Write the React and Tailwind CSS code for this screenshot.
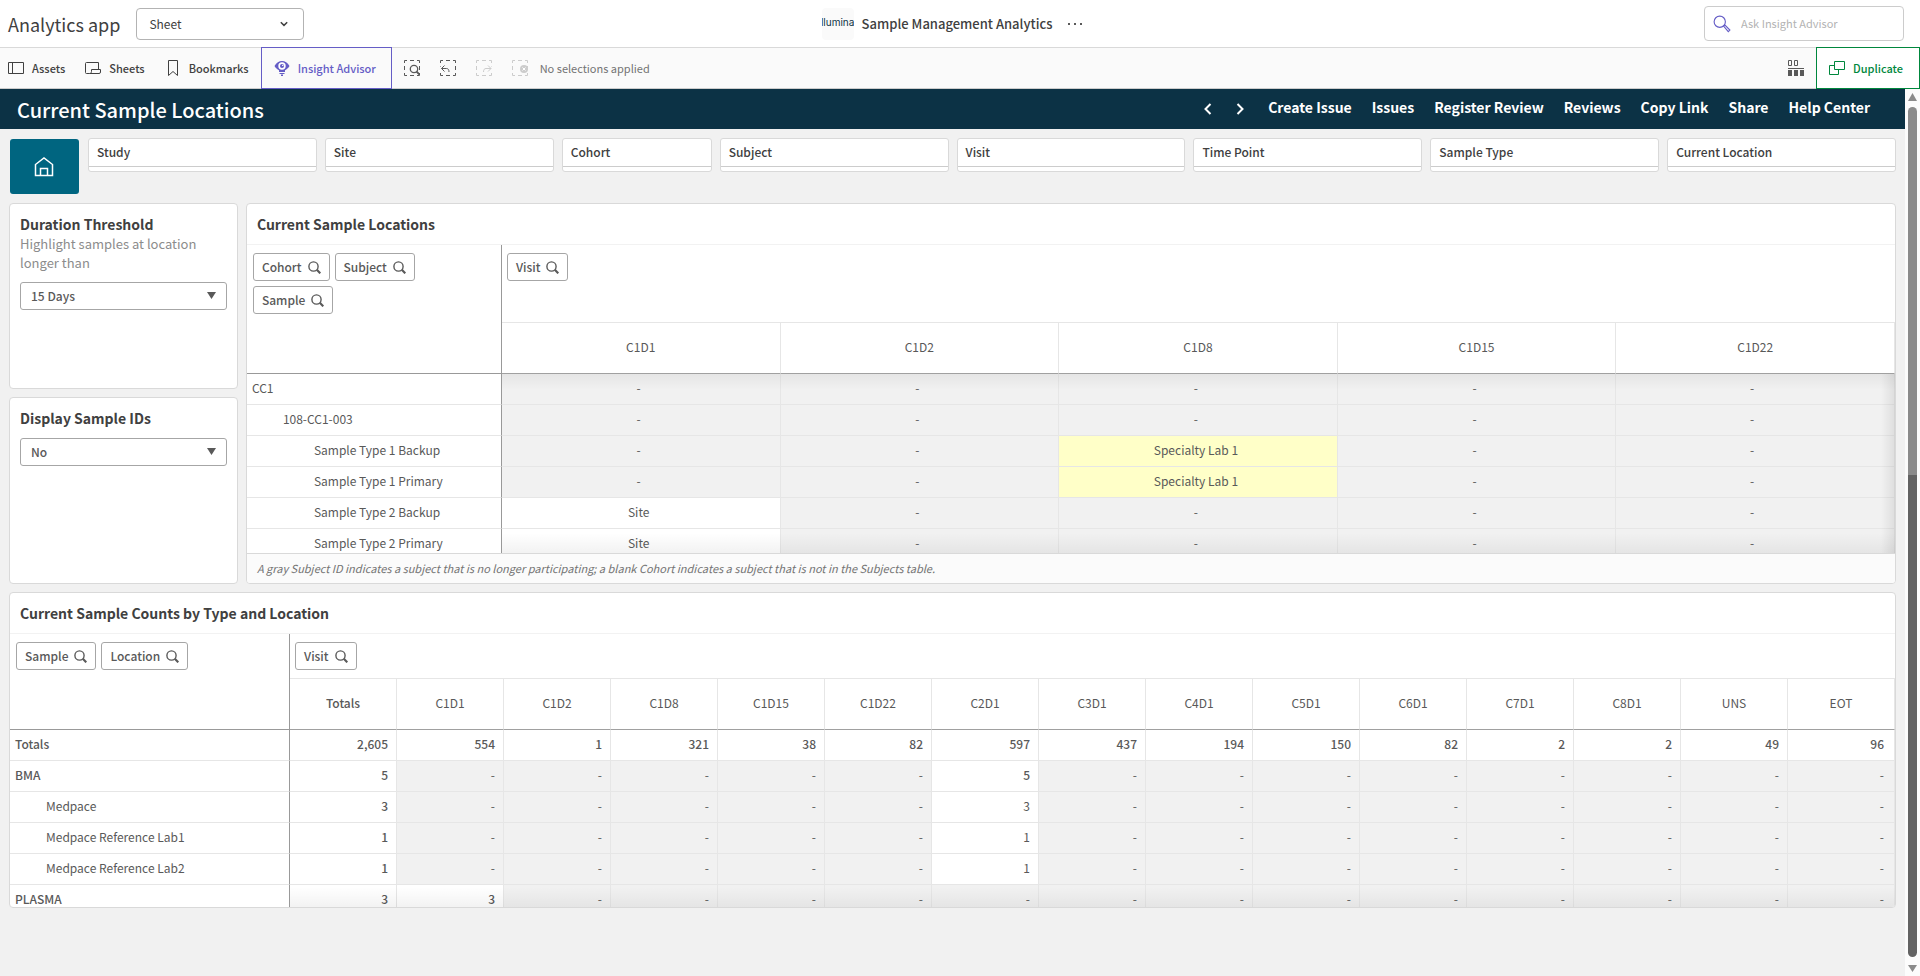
import clsx from 'clsx';

const filters = [
  { name: 'Study', span: 'col-span-3' },
  { name: 'Site', span: 'col-span-3' },
  { name: 'Cohort', span: 'col-span-2' },
  { name: 'Subject', span: 'col-span-3' },
  { name: 'Visit', span: 'col-span-3' },
  { name: 'Time Point', span: 'col-span-3' },
  { name: 'Sample Type', span: 'col-span-3' },
  { name: 'Current Location', span: 'col-span-3' },
];

const navLinks = ['Create Issue', 'Issues', 'Register Review', 'Reviews', 'Copy Link', 'Share', 'Help Center'];

const locationVisits = ['C1D1', 'C1D2', 'C1D8', 'C1D15', 'C1D22'];

const locationRows = [
  { label: 'CC1', level: 0, values: {} },
  { label: '108-CC1-003', level: 1, values: {} },
  { label: 'Sample Type 1 Backup', level: 2, values: { C1D8: 'Specialty Lab 1' } },
  { label: 'Sample Type 1 Primary', level: 2, values: { C1D8: 'Specialty Lab 1' } },
  { label: 'Sample Type 2 Backup', level: 2, values: { C1D1: 'Site' } },
  { label: 'Sample Type 2 Primary', level: 2, values: { C1D1: 'Site' } },
];

const countVisits = [
  'Totals', 'C1D1', 'C1D2', 'C1D8', 'C1D15', 'C1D22', 'C2D1', 'C3D1',
  'C4D1', 'C5D1', 'C6D1', 'C7D1', 'C8D1', 'UNS', 'EOT',
];

const countRows = [
  {
    label: 'Totals',
    level: 0,
    bold: true,
    values: {
      Totals: '2,605', C1D1: '554', C1D2: '1', C1D8: '321', C1D15: '38', C1D22: '82', C2D1: '597', C3D1: '437',
      C4D1: '194', C5D1: '150', C6D1: '82', C7D1: '2', C8D1: '2', UNS: '49', EOT: '96',
    },
  },
  { label: 'BMA', level: 0, bold: true, values: { Totals: '5', C2D1: '5' } },
  { label: 'Medpace', level: 1, values: { Totals: '3', C2D1: '3' } },
  { label: 'Medpace Reference Lab1', level: 1, values: { Totals: '1', C2D1: '1' } },
  { label: 'Medpace Reference Lab2', level: 1, values: { Totals: '1', C2D1: '1' } },
  { label: 'PLASMA', level: 0, bold: true, values: { Totals: '3', C1D1: '3' } },
];

const indent = ['pl-[5px]', 'pl-9', 'pl-[67px]'];

function Icon({ className, children, viewBox = '0 0 16 16' }) {
  return (
    <svg
      className={clsx('shrink-0', className)}
      viewBox={viewBox}
      fill="none"
      stroke="currentColor"
      strokeWidth="1"
      aria-hidden="true"
    >
      {children}
    </svg>
  );
}

function SearchIcon({ className }) {
  return (
    <Icon className={className} viewBox="0 0 13 13">
      <circle cx="5.5" cy="5.5" r="4.6" strokeWidth="1.4" />
      <path d="M8.8 8.8 12.3 12.3" strokeWidth="2.2" />
    </Icon>
  );
}

// dashed selection frame shared by the four selection tools
function SelectionFrame({ children }) {
  return (
    <Icon className="size-4">
      <path d="M.5 3V.5H3M6 .5h4M13 .5h2.5V3M15.5 6v4M15.5 13v2.500H13M10 15.500H6M3 15.500H.5V13M.5 10V6" />
      {children}
    </Icon>
  );
}

function Chip({ label }) {
  return (
    <button
      type="button"
      className="flex h-7 items-center gap-1.5 rounded-[3px] border border-[#a6a6a6] bg-white px-2 text-[12px] font-medium text-[#595959]"
    >
      {label}
      <SearchIcon className="size-[13px]" />
    </button>
  );
}

function Card({ className, children }) {
  return (
    <section className={clsx('overflow-hidden rounded border border-[#d9d9d9] bg-white', className)}>
      {children}
    </section>
  );
}

function CardTitle({ children }) {
  return (
    <h2 className="border-b border-[#f2f2f2] px-2.5 py-2.5 text-[14px] leading-5 font-bold text-[#404040]">
      {children}
    </h2>
  );
}

function VariableInput({ id, title, subtitle, value }) {
  return (
    <Card className="min-h-[186px] px-2.5 pt-2.5 last:grow">
      <label htmlFor={id} className="block text-[14px] leading-5 font-bold text-[#404040]">
        {title}
      </label>
      {subtitle && <p className="text-[13px] leading-[19px] text-[#8c8c8c]">{subtitle}</p>}
      <div className="relative mt-2.5">
        <select
          id={id}
          className="h-7 w-full appearance-none rounded-[3px] border border-[#a6a6a6] bg-white px-2.5 text-[12px] font-medium text-[#595959]"
        >
          <option>{value}</option>
        </select>
        <svg
          className="pointer-events-none absolute top-2.5 right-[11px] h-[7px] w-[9px] fill-[#595959]"
          viewBox="0 0 9 7"
          aria-hidden="true"
        >
          <path d="M0 0h9L4.500 7z" />
        </svg>
      </div>
    </Card>
  );
}

const headCell = 'border-r border-b border-r-[#e6e6e6] border-b-[#a0a0a0] pb-0.5 text-center';
const rowHead = 'border-r border-b border-r-[#999] border-b-[#e6e6e6] pr-1 pb-0.5 text-left whitespace-nowrap';
const bodyCell = 'border-r border-b border-[#e6e6e6] pb-0.5';

function LocationsTable() {
  return (
    <div className="relative h-[308px] overflow-hidden">
      <table className="w-full table-fixed border-separate border-spacing-0 text-[12px] leading-4 text-[#595959]">
        <colgroup>
          <col className="w-[255px]" />
          {locationVisits.map((visit) => (
            <col key={visit} />
          ))}
        </colgroup>
        <thead>
          <tr className="h-[78px]">
            <th rowSpan={2} className="border-r border-b border-[#999] p-0 align-top font-normal">
              <div className="flex flex-wrap gap-[5px] px-[6px] pt-2">
                <Chip label="Cohort" />
                <Chip label="Subject" />
                <Chip label="Sample" />
              </div>
            </th>
            <th colSpan={5} className="border-b border-[#e6e6e6] p-0 align-top font-normal">
              <div className="flex px-[5px] pt-2">
                <Chip label="Visit" />
              </div>
            </th>
          </tr>
          <tr className="h-[51px]">
            {locationVisits.map((visit) => (
              <th key={visit} className={clsx(headCell, 'font-normal')}>
                {visit}
              </th>
            ))}
          </tr>
        </thead>
        <tbody>
          {locationRows.map((row) => (
            <tr key={row.label} className="h-[31px]">
              <th className={clsx(rowHead, 'font-normal', indent[row.level])}>{row.label}</th>
              {locationVisits.map((visit) => {
                const value = row.values[visit];
                return (
                  <td
                    key={visit}
                    className={clsx(
                      bodyCell,
                      'pr-1 text-center last:pr-1.5',
                      !value && 'bg-[#f1f1f1]',
                      value === 'Specialty Lab 1' && 'bg-[#ffffc8]'
                    )}
                  >
                    {value || '-'}
                  </td>
                );
              })}
            </tr>
          ))}
        </tbody>
      </table>
      {/* scroll shadows over the body */}
      <div className="pointer-events-none absolute top-[129px] right-0 left-[255px] h-4 bg-linear-to-b from-black/5 to-transparent" />
      <div className="pointer-events-none absolute right-0 bottom-0 left-[255px] h-5 bg-linear-to-t from-black/5 to-transparent" />
      <div className="pointer-events-none absolute top-[129px] right-0 bottom-0 w-3.5 bg-linear-to-l from-black/8 to-transparent" />
    </div>
  );
}

function CountsTable() {
  return (
    <div className="relative h-[273px] overflow-hidden">
      <table className="w-full table-fixed border-separate border-spacing-0 text-[12px] leading-4 text-[#595959]">
        <colgroup>
          <col className="w-[280px]" />
          {countVisits.map((visit) => (
            <col key={visit} />
          ))}
        </colgroup>
        <thead>
          <tr className="h-[45px]">
            <th rowSpan={2} className="border-r border-b border-[#999] p-0 align-top font-normal">
              <div className="flex flex-wrap gap-[5px] px-[6px] pt-2">
                <Chip label="Sample" />
                <Chip label="Location" />
              </div>
            </th>
            <th colSpan={15} className="border-b border-[#e6e6e6] p-0 align-top font-normal">
              <div className="flex px-[5px] pt-2">
                <Chip label="Visit" />
              </div>
            </th>
          </tr>
          <tr className="h-[51px]">
            {countVisits.map((visit) => (
              <th key={visit} className={clsx(headCell, visit === 'Totals' ? 'font-medium' : 'font-normal')}>
                {visit}
              </th>
            ))}
          </tr>
        </thead>
        <tbody>
          {countRows.map((row) => (
            <tr key={row.label} className="h-[31px]">
              <th className={clsx(rowHead, indent[row.level], row.bold ? 'font-medium' : 'font-normal')}>
                {row.label}
              </th>
              {countVisits.map((visit) => {
                const value = row.values[visit];
                return (
                  <td
                    key={visit}
                    className={clsx(
                      bodyCell,
                      'pr-2 text-right last:pr-2.5',
                      !value && 'bg-[#f1f1f1]',
                      (row.bold || visit === 'Totals') && value && 'font-medium'
                    )}
                  >
                    {value || '-'}
                  </td>
                );
              })}
            </tr>
          ))}
        </tbody>
      </table>
      <div className="pointer-events-none absolute right-0 bottom-0 left-[280px] h-5 bg-linear-to-t from-black/5 to-transparent" />
    </div>
  );
}

function TopBar() {
  return (
    <header className="grid h-12 grid-cols-[1fr_auto_1fr] items-center border-b border-[#d9d9d9] bg-white">
      <div className="flex items-center gap-4 pl-2">
        <span className="text-[18px] leading-6 text-[#404040]">Analytics app</span>
        <div className="relative">
          <select
            aria-label="View"
            className="h-8 w-[168px] appearance-none rounded border border-[#b3b3b3] bg-white px-3 text-[12px] text-[#404040]"
          >
            <option>Sheet</option>
          </select>
          <Icon className="pointer-events-none absolute top-3 right-4 size-2 text-[#404040]" viewBox="0 0 8 8">
            <path d="M.8 2.200 4 5.400 7.200 2.200" strokeWidth="1.500" />
          </Icon>
        </div>
      </div>
      <div className="flex items-center pr-4">
        <span className="mr-2 flex h-8 w-8 justify-center overflow-hidden rounded bg-[#fafafa] pt-2 font-['Inter'] text-[10px] leading-3 text-[#0c3245]">
          llumina
        </span>
        <span className="text-[13px] font-medium text-[#404040]">Sample Management Analytics</span>
        <button type="button" aria-label="More" className="ml-4 flex gap-1">
          <span className="size-0.5 bg-[#595959]" />
          <span className="size-0.5 bg-[#595959]" />
          <span className="size-0.5 bg-[#595959]" />
        </button>
      </div>
      <div className="flex justify-end pr-4">
        <label className="flex h-[35px] w-[200px] items-center gap-2.5 rounded border border-[#ccc] bg-white px-2">
          <Icon className="size-[18px] text-[#655dc6]">
            <circle cx="6" cy="6" r="5" />
            <path d="M9.400 9.800 10.400 8.800 15 13.400 13.600 14.800z" />
          </Icon>
          <input
            type="text"
            placeholder="Ask Insight Advisor"
            className="min-w-0 flex-1 text-[11px] outline-none placeholder:text-[#b3b3b3]"
          />
        </label>
      </div>
    </header>
  );
}

function Toolbar() {
  return (
    <div className="flex h-[41px] border-b border-[#ccc] bg-[#fafafa] text-[11px] font-medium text-[#404040]">
      <button type="button" className="flex items-center gap-2 pl-2">
        <Icon className="size-4">
          <path d="M.5 2.500h15v11H.5zM4.500 2.500v11" />
        </Icon>
        Assets
      </button>
      <button type="button" className="ml-5 flex items-center gap-2">
        <Icon className="size-4">
          <path d="M4.500 13.500H1.500a1 1 0 0 1-1-1v-9a1 1 0 0 1 1-1h12V9M6.500 9.500h9v2.500a1.500 1.500 0 0 1-1.500 1.500H4.500c1.500 0 2-1 2-2z" />
        </Icon>
        Sheets
      </button>
      <button type="button" className="ml-5 flex items-center gap-2">
        <Icon className="size-4">
          <path d="M3.500.5h9v15L8 11.500 3.500 15.500z" />
        </Icon>
        Bookmarks
      </button>
      <button
        type="button"
        className="-mt-px -mb-px ml-3 flex w-[131px] items-center gap-2 border border-[#655dc6] bg-[#fafafa] pl-3 text-[#655dc6]"
      >
        <svg className="size-4 shrink-0" viewBox="0 0 16 16" aria-hidden="true">
          <path
            d="M.5 6C2.500 2.500 5 1 8 1s5.500 1.500 7.500 5c-1.200 2-2.700 3.400-4.500 4.200V12H5v-1.800C3.200 9.400 1.700 8 .5 6z"
            fill="currentColor"
          />
          <circle cx="8" cy="6" r="3.700" fill="#fff" />
          <circle cx="8" cy="6" r="2" fill="currentColor" />
          <circle cx="8.700" cy="5.400" r=".7" fill="#fff" />
          <path d="M5.500 13h5v1h-5zM7 14.500h2V16H7z" fill="currentColor" />
        </svg>
        Insight Advisor
      </button>
      <div className="flex items-center gap-5 pl-3">
        <button type="button" aria-label="Smart search" className="text-[#595959]">
          <SelectionFrame>
            <circle cx="10" cy="9" r="3.700" fill="#fafafa" strokeWidth="1.300" />
            <path d="m12.500 11.500 3 3" strokeWidth="1.800" />
          </SelectionFrame>
        </button>
        <button type="button" aria-label="Step back" className="text-[#595959]">
          <SelectionFrame>
            <path d="M0 8.500h2" stroke="#fafafa" strokeWidth="4" />
            <path d="M4.500 5.500 1.500 8.500l3 3M1.500 8.500h5c1.500 0 2.500 1 2.500 3.500" />
          </SelectionFrame>
        </button>
        <button type="button" aria-label="Step forward" className="text-[#ccc]" disabled>
          <SelectionFrame>
            <path d="M14 8.500h2" stroke="#fafafa" strokeWidth="4" />
            <path d="m12 5.500 3 3-3 3M15 8.500h-5c-1.500 0-2.500 1-2.500 3.500" />
          </SelectionFrame>
        </button>
        <button type="button" aria-label="Clear all selections" className="text-[#ccc]" disabled>
          <SelectionFrame>
            <circle cx="12" cy="9" r="4" fill="currentColor" stroke="none" />
            <path d="m10.500 7.500 3 3m0-3-3 3" stroke="#fff" />
          </SelectionFrame>
        </button>
      </div>
      <span className="ml-3 self-center font-normal text-[#737373]">No selections applied</span>
      <button type="button" aria-label="Sheet navigation" className="mr-3 ml-auto text-[#595959]">
        <Icon className="size-4">
          <path d="M.5.500h3v5h-3zM6.500.500h3v5h-3zM0 8.500h16" />
          <path d="M0 10h4v6H0zM6 10h4v6H6zM12 10h4v6h-4z" fill="currentColor" stroke="none" />
        </Icon>
      </button>
      <button
        type="button"
        className="-mt-px -mb-px flex items-center gap-2 border border-[#00873d] bg-white pr-4 pl-3 text-[#00873d]"
      >
        <Icon className="size-4">
          <path d="M5.500 1.500h10v8h-10zM5.500 5.500h-5v9h9v-5" />
        </Icon>
        Duplicate
      </button>
    </div>
  );
}

function SheetHeader() {
  return (
    <div className="flex h-10 items-center bg-[#0c3245] pr-[35px] pl-[17px] text-white">
      <h1 className="pt-0.5 text-[20px] leading-8 font-medium">Current Sample Locations</h1>
      <button type="button" aria-label="Previous sheet" className="ml-auto">
        <Icon className="h-3 w-2" viewBox="0 0 8 12">
          <path d="M6.500 1 1.500 6l5 5" strokeWidth="2" />
        </Icon>
      </button>
      <button type="button" aria-label="Next sheet" className="ml-6">
        <Icon className="h-3 w-2" viewBox="0 0 8 12">
          <path d="m1.500 1 5 5-5 5" strokeWidth="2" />
        </Icon>
      </button>
      <nav className="ml-6 flex gap-5 pb-1 text-[14px] leading-5 font-bold">
        {navLinks.map((link) => (
          <a key={link} href="#">
            {link}
          </a>
        ))}
      </nav>
    </div>
  );
}

function Scrollbar() {
  return (
    <div className="flex w-[15px] shrink-0 flex-col items-center bg-[#fcfcfc] pt-1 pb-1">
      <svg className="h-2 w-[9px] fill-[#8b8b8b]" viewBox="0 0 9 8" aria-hidden="true">
        <path d="M4.500 0 9 8H0z" />
      </svg>
      <div className="mt-1.5 h-[368px] w-[9px] rounded-t-full bg-[#8b8b8b]" />
      <div className="mb-2 w-[9px] flex-1 rounded-b-full bg-[#636363]" />
      <svg className="h-[7px] w-[9px] fill-[#8b8b8b]" viewBox="0 0 9 7" aria-hidden="true">
        <path d="M0 0h9L4.500 7z" />
      </svg>
    </div>
  );
}

export default function App() {
  return (
    <div className="flex min-h-screen flex-col bg-[#f1f1f1] font-['Noto_Sans_CJK_SC','Noto_Sans',sans-serif]">
      <TopBar />
      <Toolbar />
      <div className="flex flex-1">
        <main className="min-w-0 flex-1">
          <SheetHeader />
          <div className="grid grid-cols-24 gap-2 px-[9px] pt-[9px]">
            <a
              href="#"
              aria-label="Home"
              className="mx-px mt-px flex h-[55px] items-center justify-center rounded-[3px] bg-[#006580] text-white"
            >
              <Icon className="size-5" viewBox="0 0 20 20">
                <path d="M1.500 7.500 10 1l8.500 6.500v11h-17zM6.500 18.500v-7h7v7" strokeWidth="1.500" />
              </Icon>
            </a>
            {filters.map((filter) => (
              <button
                key={filter.name}
                type="button"
                className={clsx('h-[34px] rounded-[3px] border border-[#d9d9d9] bg-white text-left', filter.span)}
              >
                <span className="mb-1 block border-b border-[#ccc] px-2 pb-0.5 text-[12px] leading-[25px] font-medium text-[#404040]">
                  {filter.name}
                </span>
              </button>
            ))}
            <div className="col-span-3 mt-px flex flex-col gap-2">
              <VariableInput
                id="threshold"
                title="Duration Threshold"
                subtitle="Highlight samples at location longer than"
                value="15 Days"
              />
              <VariableInput id="display-ids" title="Display Sample IDs" value="No" />
            </div>
            <Card className="col-span-21 mt-px">
              <CardTitle>Current Sample Locations</CardTitle>
              <LocationsTable />
              <p className="border-t border-[#d9d9d9] bg-[#fbfbfb] px-2.5 text-[11px] leading-[29px] text-[#737373] italic">
                A gray Subject ID indicates a subject that is no longer participating; a blank Cohort indicates a
                subject that is not in the Subjects table.
              </p>
            </Card>
            <Card className="col-span-24">
              <CardTitle>Current Sample Counts by Type and Location</CardTitle>
              <CountsTable />
            </Card>
          </div>
        </main>
        <Scrollbar />
      </div>
    </div>
  );
}
